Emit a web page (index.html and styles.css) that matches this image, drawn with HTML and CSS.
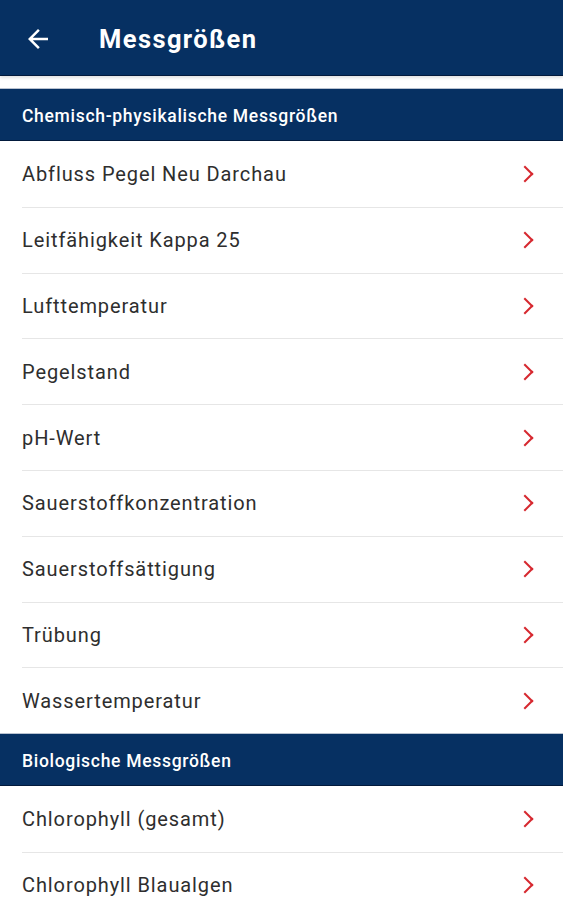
FILE: index.html
```html
<!DOCTYPE html>
<html lang="de">
<head>
    <meta charset="UTF-8">
    <meta name="viewport" content="width=device-width, initial-scale=1.0">
    <title>Messgrößen</title>
    <link rel="stylesheet" href="styles.css">
</head>
<body>

    <!-- Toolbar -->
    <header class="toolbar">
        <svg class="back" viewBox="0 0 24 24" width="30" height="30">
            <path d="M20 11H7.83l5.59-5.59L12 4l-8 8 8 8 1.41-1.41L7.83 13H20v-2z" fill="#fff"/>
        </svg>
        <h1 class="title">Messgrößen</h1>
    </header>

    <!-- Chemisch-physikalische -->
    <div class="section">Chemisch-physikalische Messgrößen</div>
    <ul class="list">
        <li class="item"><span>Abfluss Pegel Neu Darchau</span><i class="chev"></i></li>
        <li class="item"><span>Leitfähigkeit Kappa 25</span><i class="chev"></i></li>
        <li class="item"><span>Lufttemperatur</span><i class="chev"></i></li>
        <li class="item"><span>Pegelstand</span><i class="chev"></i></li>
        <li class="item"><span>pH-Wert</span><i class="chev"></i></li>
        <li class="item"><span>Sauerstoffkonzentration</span><i class="chev"></i></li>
        <li class="item"><span>Sauerstoffsättigung</span><i class="chev"></i></li>
        <li class="item"><span>Trübung</span><i class="chev"></i></li>
        <li class="item"><span>Wassertemperatur</span><i class="chev"></i></li>
    </ul>

    <!-- Biologische -->
    <div class="section">Biologische Messgrößen</div>
    <ul class="list">
        <li class="item"><span>Chlorophyll (gesamt)</span><i class="chev"></i></li>
        <li class="item"><span>Chlorophyll Blaualgen</span><i class="chev"></i></li>
    </ul>

</body>
</html>
```

FILE: styles.css
```css
/* Global */
body {
    margin: 0;
    background: #fff;
    font-family: Roboto, "Noto Sans", sans-serif;
    overflow: hidden;
}
/* Toolbar */
.toolbar {
    height: 75px;
    box-sizing: border-box;
    background: #063062;
    display: flex;
    align-items: center;
    padding: 2px 0 0 23px;
    box-shadow: 0 1px 0 #021a3c, 0 3px 3px rgba(0, 0, 0, 0.12);
    margin-bottom: 13px;
}
.title {
    margin: 0 0 0 46px;
    color: #fff;
    font-size: 25.5px;
    font-weight: 700;
    letter-spacing: 1.4px;
}
/* Section header */
.section {
    height: 53px;
    box-sizing: border-box;
    background: #063062;
    color: #fff;
    font-size: 17.5px;
    font-weight: 500;
    letter-spacing: 0.7px;
    padding: 2px 0 0 22px;
    display: flex;
    align-items: center;
    border-top: 1px solid #b9c2d0;
    border-bottom: 1px solid #021a3c;
}
/* List */
.list {
    list-style: none;
    margin: 0;
    padding: 0 0 0 22px;
}
.item {
    height: 65.8px;
    box-sizing: border-box;
    display: flex;
    align-items: center;
    justify-content: space-between;
    color: #2e2e2e;
    font-size: 20px;
    letter-spacing: 0.9px;
    border-top: 1px solid #e6e6e6;
}
.item:first-child {
    border-top: none;
}
.chev {
    width: 10px;
    height: 10px;
    border-top: 2px solid #d6282f;
    border-right: 2px solid #d6282f;
    transform: rotate(45deg);
    margin-right: 32px;
}
```
